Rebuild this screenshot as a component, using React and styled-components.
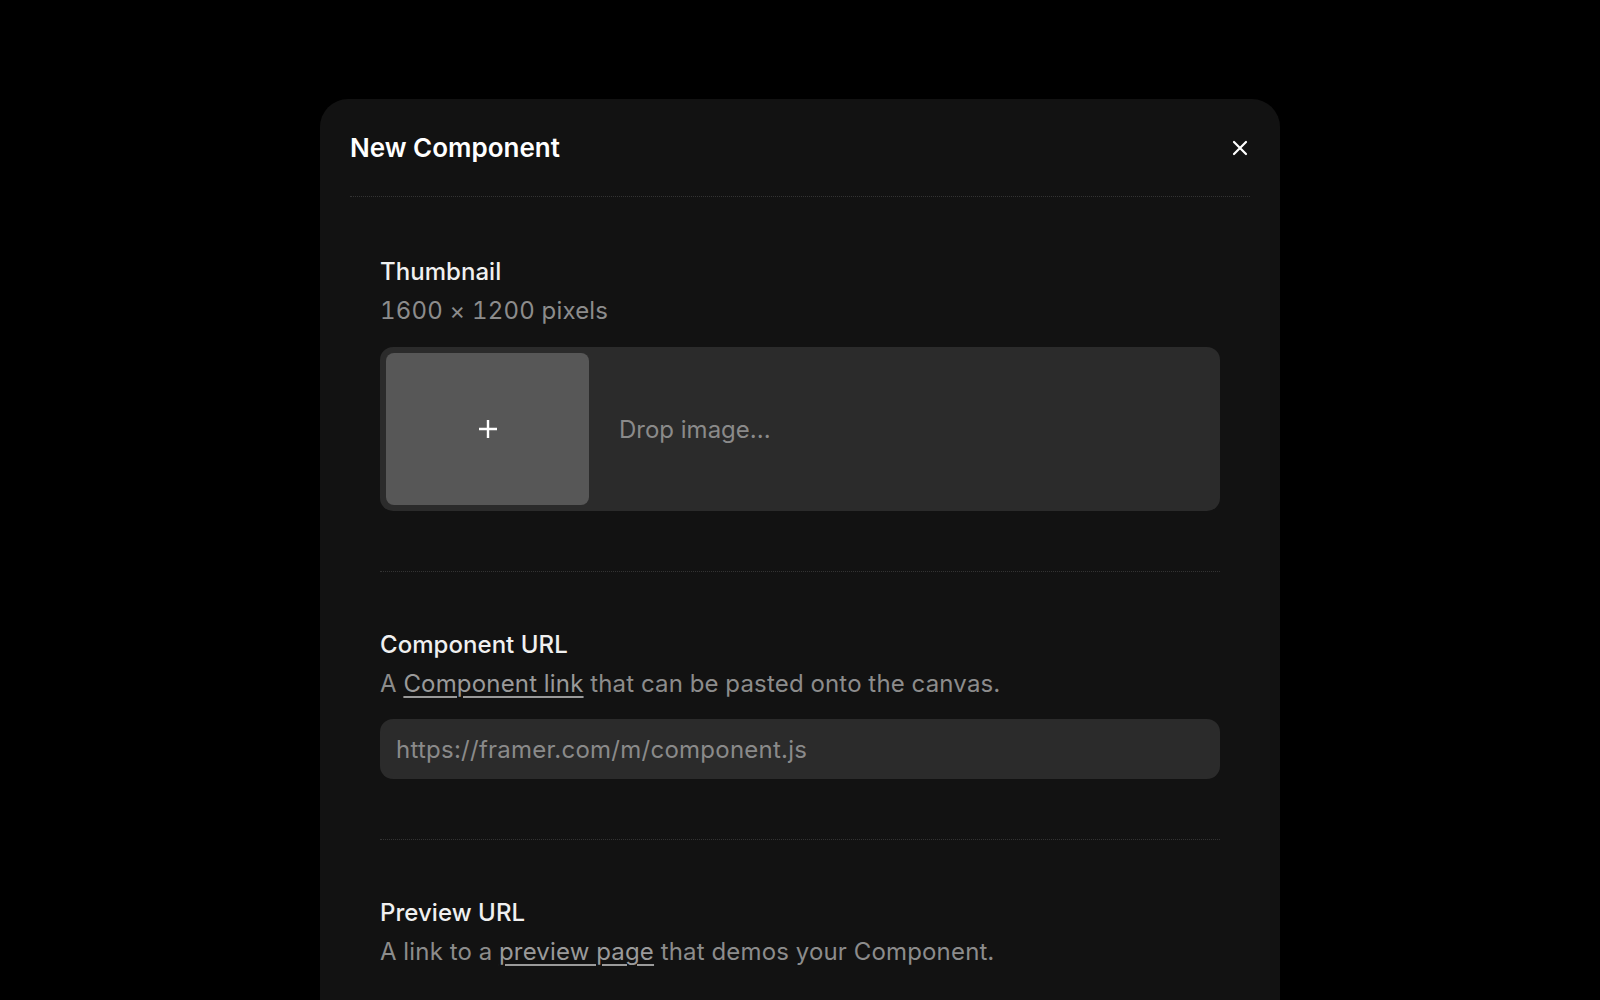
import React from "react";
import styled, { createGlobalStyle } from "styled-components";

const GlobalStyle = createGlobalStyle`
  html, body {
    margin: 0;
    padding: 0;
    background: #000;
    overflow: hidden;
  }
  body {
    font-family: Inter, "Noto Sans", "Liberation Sans", sans-serif;
    -webkit-font-smoothing: antialiased;
  }
`;

const Page = styled.div`
  width: 100%;
  height: 1000px;
  display: flex;
  justify-content: center;
  padding-top: 99px;
  box-sizing: border-box;
`;

const Modal = styled.div`
  width: 960px;
  align-self: flex-start;
  background: #121212;
  border-radius: 28px;
  padding: 0 30px 60px;
  box-sizing: border-box;
`;

const Header = styled.div`
  height: 97px;
  display: flex;
  align-items: center;
  justify-content: space-between;
  border-bottom: 1px dotted #333;
  h1 {
    margin: 0;
    font-size: 26px;
    font-weight: 600;
    color: #fff;
  }
`;

const CloseButton = styled.button`
  width: 30px;
  height: 30px;
  margin-right: -5px;
  border: none;
  background: transparent;
  display: flex;
  align-items: center;
  justify-content: center;
  padding: 0;
  cursor: pointer;
`;

const Section = styled.section`
  margin: 0 30px;
  padding: ${({ $first }) => ($first ? "60px" : "58px")} 0 60px;
  border-bottom: ${({ $last }) => ($last ? "none" : "1px dotted #333")};
`;

const Label = styled.div`
  font-size: 24px;
  line-height: 30px;
  font-weight: 500;
  color: #f0f0f0;
  letter-spacing: 0.05px;
`;

const Hint = styled.div`
  margin-top: 9px;
  font-size: 24px;
  line-height: 30px;
  color: #8c8c8c;
  letter-spacing: 0.18px;
  font-variant-numeric: tabular-nums;
  a {
    color: #9a9a9a;
    text-decoration: underline;
    text-underline-offset: 4px;
    text-decoration-thickness: 2px;
  }
`;

const DropZone = styled.div`
  margin-top: 21px;
  height: 164px;
  padding: 6px;
  box-sizing: border-box;
  background: #2b2b2b;
  border-radius: 13px;
  display: flex;
  align-items: center;
  gap: 30px;
`;

const ThumbSlot = styled.div`
  width: 203px;
  height: 152px;
  border-radius: 8px;
  background: #575757;
  display: flex;
  align-items: center;
  justify-content: center;
`;

const DropText = styled.span`
  font-size: 24px;
  color: #8a8a8a;
`;

const UrlInput = styled.input`
  margin-top: 20px;
  width: 100%;
  height: 60px;
  box-sizing: border-box;
  border: none;
  outline: none;
  border-radius: 13px;
  background: #2b2b2b;
  padding: 0 16px;
  font-family: inherit;
  font-size: 24px;
  letter-spacing: 0.25px;
  color: #ddd;
  &::placeholder {
    color: #8a8a8a;
  }
`;

function CloseIcon() {
  return (
    <svg width="16" height="16" viewBox="0 0 16 16">
      <path d="M2 2 L14 14 M14 2 L2 14" stroke="#fff" strokeWidth="2.2" strokeLinecap="round" />
    </svg>
  );
}

function PlusIcon() {
  return (
    <svg width="20" height="20" viewBox="0 0 20 20">
      <path d="M10 1 V19 M1 10 H19" stroke="#fff" strokeWidth="2.4" />
    </svg>
  );
}

export default function App() {
  return (
    <>
      <GlobalStyle />
      <Page>
        <Modal>
          <Header>
            <h1>New Component</h1>
            <CloseButton aria-label="Close">
              <CloseIcon />
            </CloseButton>
          </Header>

          <Section $first>
            <Label>Thumbnail</Label>
            <Hint>1600 × 1200 pixels</Hint>
            <DropZone>
              <ThumbSlot>
                <PlusIcon />
              </ThumbSlot>
              <DropText>Drop image...</DropText>
            </DropZone>
          </Section>

          <Section>
            <Label>Component URL</Label>
            <Hint>
              A <a href="#">Component link</a> that can be pasted onto the canvas.
            </Hint>
            <UrlInput placeholder="https://framer.com/m/component.js" />
          </Section>

          <Section $last>
            <Label>Preview URL</Label>
            <Hint>
              A link to a <a href="#">preview page</a> that demos your Component.
            </Hint>
          </Section>
        </Modal>
      </Page>
    </>
  );
}
